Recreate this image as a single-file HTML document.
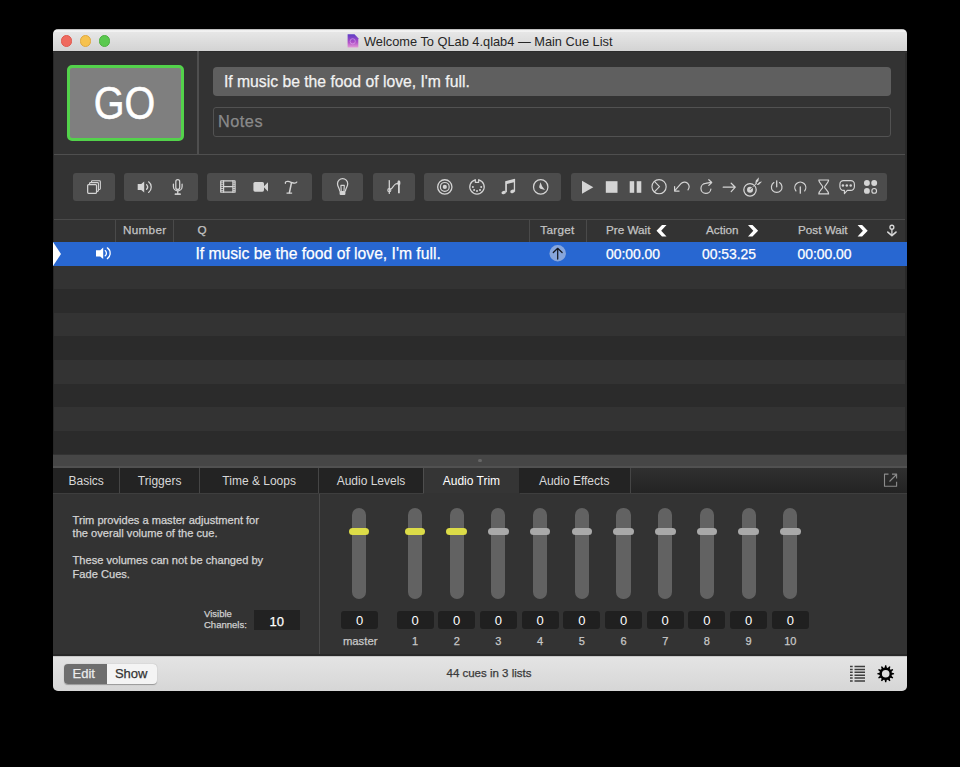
<!DOCTYPE html>
<html><head><meta charset="utf-8">
<style>
*{box-sizing:border-box;margin:0;padding:0}
html,body{-webkit-font-smoothing:antialiased;width:960px;height:767px;background:#000;overflow:hidden;font-family:"Liberation Sans",sans-serif}
.a{position:absolute}
#win{position:absolute;left:53px;top:29px;width:853.6px;height:662px;border-radius:5px;overflow:hidden;background:#333}
#title{left:0;top:0;width:854px;height:22.2px;background:linear-gradient(#a8a8a8 0px,#f4f4f4 1.6px,#f2f2f2 2.6px,#e6e6e6 3.4px,#d3d3d3 22.2px)}
.tl{width:11.4px;height:11.4px;border-radius:50%;top:6.2px}
.ttext{font-size:12.8px;color:#262626;white-space:nowrap}
.txt{white-space:nowrap;-webkit-text-stroke:0.25px}
.btn{background:#4c4c4c;border-radius:3px;top:143.5px;height:28.5px}
.ic{stroke:#d0d0d0;fill:none;stroke-width:1.3}
.row{left:0;width:854px}
.tab{top:438.5px;height:25.5px;background:#232323;color:#d8d8d8;font-size:12px;text-align:center;line-height:26.6px;border-right:1px solid #454545}
.trk{width:14.2px;height:91px;border-radius:7.1px;background:#626262;top:479px}
.knob{width:20.5px;height:7px;border-radius:3.5px;background:#a9a9a9;top:499px}
.val{width:37px;height:18px;border-radius:3px;background:#202020;top:582.2px;color:#fff;font-size:13px;text-align:center;line-height:20.6px}
.lbl{top:606.4px;width:40px;color:#c8c8c8;font-size:11px;text-align:center}
.hd{font-size:11.7px;color:#c4c4c4;line-height:16px;margin-top:-1px}
.rv{top:212.7px;line-height:24px;color:#fff;font-size:13.9px}
.pt{font-size:11.1px;line-height:13.5px;color:#d4d4d4}
</style></head><body>
<div id="win">
  <div id="title" class="a">
    <div class="a tl" style="left:7.7px;background:#ef6a5f;border:0.5px solid #e0574c"></div>
    <div class="a tl" style="left:26.9px;background:#f6c24f;border:0.5px solid #e0a83e"></div>
    <div class="a tl" style="left:45.7px;background:#5bc94f;border:0.5px solid #4cb040"></div>
  </div>

  <div class="a" style="left:0;top:22.2px;width:854px;height:1.3px;background:#2b2b2b"></div>
  <div class="a ttext" style="left:311px;top:4.6px">Welcome To QLab 4.qlab4 — Main Cue List</div>
  <!-- top area -->
  <div class="a" style="left:14px;top:36px;width:117px;height:75.6px;border:3px solid #53d24b;border-radius:5px;background:#7f7f7f"></div>
  <div class="a txt" style="left:12.5px;top:37.3px;width:117px;height:75.6px;line-height:75px;text-align:center;color:#fff;font-size:46.5px;transform:scaleX(0.85);-webkit-text-stroke:0.6px #fff">GO</div>
  <div class="a" style="left:144.2px;top:22px;width:1.8px;height:103px;background:#4f4f4f"></div>
  <div class="a" style="left:0;top:124.6px;width:854px;height:1.6px;background:#4f4f4f"></div>
  <div class="a" style="left:160px;top:37.5px;width:678px;height:29.5px;border-radius:4px;background:#5f5f5f"></div>
  <div class="a txt" style="left:170.9px;top:37.5px;line-height:29.5px;color:#f2f2f2;font-size:15.73px">If music be the food of love, I'm full.</div>
  <div class="a" style="left:160px;top:78.2px;width:678px;height:30.3px;border-radius:3px;border:1.4px solid #525252"></div>
  <div class="a txt" style="left:165px;top:77px;line-height:30px;color:#8a8a8a;font-size:16.3px;letter-spacing:.5px">Notes</div>
  <!-- toolbar -->
  <div class="a btn" style="left:20px;width:42px"></div>
  <div class="a btn" style="left:71px;width:73.5px"></div>
  <div class="a btn" style="left:154px;width:105px"></div>
  <div class="a btn" style="left:269px;width:41px"></div>
  <div class="a btn" style="left:320px;width:41.5px"></div>
  <div class="a btn" style="left:371px;width:137px"></div>
  <div class="a btn" style="left:518px;width:316px"></div>
  <div class="a" style="left:0;top:190px;width:854px;height:1.2px;background:#4a4a4a"></div>
  <!-- header -->
  <div class="a" style="left:62px;top:191px;width:1px;height:21.6px;background:#4a4a4a"></div>
  <div class="a" style="left:120.2px;top:191px;width:1px;height:21.6px;background:#4a4a4a"></div>
  <div class="a" style="left:475.5px;top:191px;width:1px;height:21.6px;background:#4a4a4a"></div>
  <div class="a" style="left:533px;top:191px;width:1px;height:21.6px;background:#4a4a4a"></div>
  <div class="a txt hd" style="left:70px;top:194px;letter-spacing:.3px">Number</div>
  <div class="a txt hd" style="left:144.5px;top:194px">Q</div>
  <div class="a txt hd" style="left:487.3px;top:194px;letter-spacing:.3px">Target</div>
  <div class="a txt hd" style="left:553px;top:194px">Pre Wait</div>
  <div class="a txt hd" style="left:653px;top:194px">Action</div>
  <div class="a txt hd" style="left:745px;top:194px">Post Wait</div>
  <!-- rows -->
  <div class="a row" style="top:212.7px;height:24px;background:#2867d1"></div>
  <div class="a row" style="top:236.60px;height:23.61px;background:#333"></div>
  <div class="a row" style="top:260.21px;height:23.61px;background:#2b2b2b"></div>
  <div class="a row" style="top:283.82px;height:23.61px;background:#333"></div>
  <div class="a row" style="top:307.43px;height:23.61px;background:#2b2b2b"></div>
  <div class="a row" style="top:331.04px;height:23.61px;background:#333"></div>
  <div class="a row" style="top:354.65px;height:23.61px;background:#2b2b2b"></div>
  <div class="a row" style="top:378.26px;height:23.61px;background:#333"></div>
  <div class="a row" style="top:401.87px;height:23.61px;background:#2b2b2b"></div>
  <svg class="a" style="left:0;top:212.7px" width="8" height="24"><path d="M0 0L8 12L0 24Z" fill="#fff"/></svg>
  <div class="a txt" style="left:142.4px;top:212.7px;line-height:24px;color:#fff;font-size:15.7px">If music be the food of love, I'm full.</div>
  <div class="a txt rv" style="left:553px">00:00.00</div>
  <div class="a txt rv" style="left:649px">00:53.25</div>
  <div class="a txt rv" style="left:744.5px">00:00.00</div>
  <!-- splitter -->
  <div class="a" style="left:0;top:425.5px;width:854px;height:13.3px;background:#464646"></div>
  <div class="a" style="left:0;top:437.4px;width:854px;height:1.2px;background:#515151"></div>
  <div class="a" style="left:425.3px;top:430px;width:3.4px;height:3.4px;border-radius:50%;background:#666"></div>
  <!-- tabs -->
  <div class="a" style="left:0;top:438.5px;width:854px;height:25.5px;background:linear-gradient(#303030,#232323)"></div>
  <div class="a tab" style="left:0;width:67.3px">Basics</div>
  <div class="a tab" style="left:67.3px;width:79.7px">Triggers</div>
  <div class="a tab" style="left:147px;width:119.3px">Time &amp; Loops</div>
  <div class="a tab" style="left:266.3px;width:104.4px">Audio Levels</div>
  <div class="a tab" style="left:370.2px;width:96.5px;background:#353535;color:#fff;border-right:1.2px solid #4e4e4e;border-left:1.2px solid #4e4e4e;height:26.5px">Audio Trim</div>
  <div class="a tab" style="left:465.5px;width:112.3px">Audio Effects</div>
  <!-- panel -->
  <div class="a" style="left:0;top:464px;width:854px;height:162.8px;background:#333"></div>
  <div class="a" style="left:266px;top:464px;width:1px;height:162.8px;background:#4a4a4a"></div>
  <div class="a" style="left:0;top:464.2px;width:370.7px;height:1.3px;background:#3e3e3e"></div>
  <div class="a" style="left:466.5px;top:464.2px;width:387.5px;height:1.3px;background:#3e3e3e"></div>
  <div class="a txt pt" style="left:19.6px;top:484.8px">Trim provides a master adjustment for<br>the overall volume of the cue.<br><br>These volumes can not be changed by<br>Fade Cues.</div>
  <div class="a txt" style="left:151px;top:579px;font-size:9.5px;line-height:11px;color:#d0d0d0">Visible<br>Channels:</div>
  <div class="a" style="left:201px;top:581px;width:45.7px;height:20px;background:#222"></div>
  <div class="a txt" style="left:200.8px;top:582.5px;width:45.7px;line-height:20px;text-align:center;color:#fff;font-size:13px">10</div>
  <div class="a" style="left:0;top:23.5px;width:1.3px;height:189.2px;background:#282828"></div>
  <div class="a" style="left:0;top:236.6px;width:1.3px;height:188.9px;background:#262626"></div>
  <div class="a" style="left:852.2px;top:23.5px;width:1.4px;height:189.2px;background:#2b2b2b"></div>
  <div class="a" style="left:852.2px;top:236.6px;width:1.4px;height:188.9px;background:#292929"></div>
  <div class="a" style="left:0;top:625.3px;width:854px;height:1.6px;background:#292929"></div>
  <!-- status bar -->
  <div class="a" style="left:0;top:626.8px;width:854px;height:35.2px;background:linear-gradient(#e4e4e4,#d6d6d6);border-top:1px solid #c8c8c8"></div>
  <div class="a" style="left:10.6px;top:635px;width:93.7px;height:19.5px;border-radius:4px;background:#f4f4f4;box-shadow:0 0.5px 1px rgba(0,0,0,.3)"></div>
  <div class="a" style="left:10.6px;top:635px;width:43.3px;height:19.5px;border-radius:4px 0 0 4px;background:#6e6e6e"></div>
  <div class="a txt" style="left:9.1px;top:635px;width:43.3px;line-height:19.5px;text-align:center;color:#ececec;font-size:13px">Edit</div>
  <div class="a txt" style="left:53px;top:635px;width:50.4px;line-height:19.5px;text-align:center;color:#333;font-size:13px">Show</div>
  <div class="a txt" style="left:0;top:635px;width:872px;line-height:19.5px;text-align:center;color:#3a3a3a;font-size:11.5px">44 cues in 3 lists</div>
  <div class="a trk" style="left:298.9px"></div>
  <div class="a knob" style="left:295.8px;background:#dcdc48"></div>
  <div class="a val" style="left:288.1px">0</div>
  <div class="a lbl txt" style="left:287.2px;font-size:11.3px">master</div>
  <div class="a trk" style="left:354.9px"></div>
  <div class="a knob" style="left:351.8px;background:#dcdc48"></div>
  <div class="a val" style="left:343.5px">0</div>
  <div class="a lbl txt" style="left:342.0px">1</div>
  <div class="a trk" style="left:396.6px"></div>
  <div class="a knob" style="left:393.4px;background:#dcdc48"></div>
  <div class="a val" style="left:385.2px">0</div>
  <div class="a lbl txt" style="left:383.7px">2</div>
  <div class="a trk" style="left:438.3px"></div>
  <div class="a knob" style="left:435.1px;background:#a9a9a9"></div>
  <div class="a val" style="left:426.9px">0</div>
  <div class="a lbl txt" style="left:425.4px">3</div>
  <div class="a trk" style="left:480.0px"></div>
  <div class="a knob" style="left:476.9px;background:#a9a9a9"></div>
  <div class="a val" style="left:468.6px">0</div>
  <div class="a lbl txt" style="left:467.1px">4</div>
  <div class="a trk" style="left:521.7px"></div>
  <div class="a knob" style="left:518.5px;background:#a9a9a9"></div>
  <div class="a val" style="left:510.3px">0</div>
  <div class="a lbl txt" style="left:508.8px">5</div>
  <div class="a trk" style="left:563.4px"></div>
  <div class="a knob" style="left:560.2px;background:#a9a9a9"></div>
  <div class="a val" style="left:552.0px">0</div>
  <div class="a lbl txt" style="left:550.5px">6</div>
  <div class="a trk" style="left:605.1px"></div>
  <div class="a knob" style="left:602.0px;background:#a9a9a9"></div>
  <div class="a val" style="left:593.7px">0</div>
  <div class="a lbl txt" style="left:592.2px">7</div>
  <div class="a trk" style="left:646.8px"></div>
  <div class="a knob" style="left:643.7px;background:#a9a9a9"></div>
  <div class="a val" style="left:635.4px">0</div>
  <div class="a lbl txt" style="left:633.9px">8</div>
  <div class="a trk" style="left:688.5px"></div>
  <div class="a knob" style="left:685.4px;background:#a9a9a9"></div>
  <div class="a val" style="left:677.1px">0</div>
  <div class="a lbl txt" style="left:675.6px">9</div>
  <div class="a trk" style="left:730.2px"></div>
  <div class="a knob" style="left:727.0px;background:#a9a9a9"></div>
  <div class="a val" style="left:718.8px">0</div>
  <div class="a lbl txt" style="left:717.3px">10</div>
</div>
<svg class="a" style="left:0;top:0" width="960" height="767" viewBox="0 0 960 767">
<g fill="none" stroke="#d4d4d4" stroke-width="1.25" stroke-linecap="round" stroke-linejoin="round">
 <!-- group stack -->
 <rect x="91.45" y="180.75" width="8.9" height="8.7" rx="0.9" fill="#4c4c4c" stroke-width="1.1"/>
 <rect x="89.55" y="182.65" width="8.9" height="8.7" rx="0.9" fill="#4c4c4c" stroke-width="1.1"/>
 <rect x="87.65" y="184.55" width="8.9" height="8.7" rx="0.9" fill="#4c4c4c"/>
 <!-- speaker waves -->
 <path d="M146.6 184.6 A3.4 3.4 0 0 1 146.6 189.3"/>
 <path d="M148.6 181.8 A6.6 6.6 0 0 1 148.6 192.4"/>
 <!-- mic -->
 <rect x="175.8" y="179.7" width="3.9" height="9.7" rx="1.95"/>
 <path d="M173.4 184.2 V186.6 A4.35 4.35 0 0 0 182.1 186.6 V184.2"/>
 <path d="M177.75 191 V193.6 M175.2 194.2 H180.3"/>
 <!-- film -->
 <rect x="220.7" y="180.9" width="14.4" height="11.3" rx="0.3" stroke-width="1.2"/>
 <path d="M223.6 180.9 V192.2 M232.9 180.9 V192.2 M223.6 186.55 H232.9" stroke-width="1.2"/>
 <!-- bulb -->
 <path d="M339.8 191 C339.6 188.5 337.5 186.6 337.5 183.7 A5.1 5.1 0 0 1 347.7 183.7 C347.7 186.6 345.6 188.5 345.4 191"/>
 <path d="M341.2 190.8 L340.9 185.4 H344.3 L344 190.8" stroke-width="1.15"/>
 <!-- fade -->
 <path d="M389.3 180.6 V193.4"/>
 <path d="M390.6 189.3 C393 188 393.6 185 395.6 184 C396.6 183.5 397.5 183.4 398.6 183.4" stroke-width="1.1"/>
 <path d="M398.9 183 V193.3" stroke-width="1.8" stroke-linecap="butt"/>
 <!-- osc -->
 <circle cx="444.8" cy="186.9" r="7.15" stroke-width="1.3"/>
 <circle cx="444.8" cy="186.9" r="4.4" stroke-width="1.2"/>
 <!-- midi -->
 <path d="M475.3 179.85 A7.2 7.2 0 1 0 478.7 179.85" stroke-width="1.25"/>
 <path d="M475.3 179.85 V182.3 H478.7 V179.85" stroke-width="1.2"/>
 <!-- clock -->
 <circle cx="540.7" cy="186.9" r="7.2" stroke-width="1.25"/>
 <!-- goto -->
 <circle cx="659.06" cy="186.7" r="7.1" stroke-width="1.15"/>
 <path d="M654.4 181.4 L659.5 186.7 L654.4 191.9" stroke-width="1.15"/>
 <!-- undo -->
 <path d="M688 189.8 A4.6 4.6 0 1 0 680.95 183.65 L675 190.3" stroke-width="1.2"/>
 <path d="M674.6 186.6 V191.1 H679.1" stroke-width="1.2"/>
 <!-- redo -->
 <path d="M710.9 189 A5 5 0 1 1 705.5 183.4 L711.2 182.4" stroke-width="1.2"/>
 <path d="M708.8 179.7 L711.7 182.5 L708.8 185.4" stroke-width="1.2"/>
 <!-- arrow -->
 <path d="M723.2 187.2 H735.2 M731.2 183.2 L735.3 187.2 L731.2 191.6" stroke-width="1.2"/>
 <!-- dart -->
 <circle cx="750" cy="189.8" r="6.2" stroke-width="1.25"/>
 <path d="M753 186.8 L756.5 183.3" stroke-width="1.0"/>
 <!-- power -->
 <path d="M773.9 182.6 A5.3 5.3 0 1 0 779.5 182.6" stroke-width="1.2"/>
 <path d="M776.7 180.8 V186.8" stroke-width="1.3"/>
 <!-- arch -->
 <path d="M795.9 190.9 A5.5 5.5 0 1 1 804.7 190.9" stroke-width="1.2"/>
 <path d="M800.3 187 V193.2" stroke-width="1.3"/>
 <!-- hourglass -->
 <path d="M818.8 180 H828.6 C828.6 183.2 824.6 185.3 824.6 187 C824.6 188.7 828.6 190.8 828.6 193.9 H818.8 C818.8 190.8 822.8 188.7 822.8 187 C822.8 185.3 818.8 183.2 818.8 180 Z" stroke-width="1.2"/>
 <!-- bubble -->
 <path d="M843.5 180.6 H850.8 A3.6 3.6 0 0 1 854.4 184.2 V186.8 A3.6 3.6 0 0 1 850.8 190.4 H847.3 L844.4 193.6 V190.4 H843.5 A3.6 3.6 0 0 1 839.9 186.8 V184.2 A3.6 3.6 0 0 1 843.5 180.6 Z" stroke-width="1.15"/>
 <circle cx="874.2" cy="190.9" r="2.35" stroke-width="1.15"/>
 <!-- popout -->
 <path d="M888.5 474.1 H884.5 V486.3 H896.6 V481.8 M889.5 481.5 L896 475 M892 474.1 H896.6 V478.4" stroke="#8c8c8c" stroke-width="1.1" stroke-linecap="butt"/>
</g>
<g fill="#d4d4d4">
 <path d="M137.7 184 H141.2 L144.2 181.4 V192.5 L141.2 189.9 H137.7 Z"/>
 <rect x="174.9" y="193.6" width="5.6" height="1.1"/>
 <path d="M220.7 182.80 H223.6 M232.9 182.80 H235.1 M220.7 184.70 H223.6 M232.9 184.70 H235.1 M220.7 186.60 H223.6 M232.9 186.60 H235.1 M220.7 188.50 H223.6 M232.9 188.50 H235.1 M220.7 190.40 H223.6 M232.9 190.40 H235.1" stroke="#d4d4d4" stroke-width="0.9"/>
 <path d="M253.4 183.6 Q253.4 182 255 182 H262.4 Q264 182 264 183.6 V190.1 Q264 191.7 262.4 191.7 H255 Q253.4 191.7 253.4 190.1 Z"/>
 <path d="M263.4 186.85 L268 182.3 V191.4 Z"/>
 <rect x="339.6" y="191.1" width="5.8" height="3.9" rx="1"/>
 <circle cx="389.3" cy="190.2" r="1.55" fill="none" stroke="#d4d4d4" stroke-width="1.1"/>
 <ellipse cx="398.9" cy="182.9" rx="1.55" ry="2.6"/>
 <circle cx="444.8" cy="186.9" r="2.1"/>
 <circle cx="472.9" cy="186.9" r="1"/><circle cx="481.2" cy="186.9" r="1"/>
 <circle cx="474.1" cy="189.9" r="1"/><circle cx="480" cy="189.9" r="1"/><circle cx="477" cy="191.1" r="1"/>
 <path d="M505.2 181.2 L514.9 178.8 V181.9 L506.9 183.9 V192.2 H505.2 Z"/>
 <rect x="513.8" y="179" width="1.3" height="12.6"/>
 <ellipse cx="503.7" cy="192.5" rx="2.3" ry="1.7" transform="rotate(-20 503.7 192.5)"/>
 <ellipse cx="512.5" cy="191.4" rx="2.3" ry="1.7" transform="rotate(-20 512.5 191.4)"/>
 <path d="M540.5 182.2 L542.1 186.2 L545 189.9 L540.4 188.7 L539.1 187.3 L539.5 185.6 Z"/>
 <path d="M582 180.7 L593.3 187.2 L582 193.7 Z"/>
 <rect x="605.8" y="181.2" width="11.7" height="11.6"/>
 <rect x="629.7" y="181.2" width="4.5" height="11.6"/>
 <rect x="636.7" y="181.2" width="4.6" height="11.6"/>
 <circle cx="750" cy="189.8" r="3"/>
 <path d="M755.2 183.9 L755.8 180.6 L758.9 177.3 L758.4 180.9 Z M756.3 185 L759.5 182.1 L762.1 181.4 L758.9 184.8 Z"/>
 <circle cx="842.9" cy="185.5" r="1.25"/><circle cx="846.8" cy="185.5" r="1.25"/><circle cx="850.7" cy="185.5" r="1.25"/>
 <circle cx="866.9" cy="183" r="2.95"/><circle cx="874.2" cy="183" r="2.95"/><circle cx="866.9" cy="190.9" r="2.95"/>
</g>
<path d="M750 189.8 L753.3 186.5" stroke="#4c4c4c" stroke-width="0.9"/>
<g fill="none" stroke="#d4d4d4" stroke-linecap="round">
 <path d="M285.4 183.3 C285 181.9 286.4 181.2 288 181.4 C290.5 181.7 292.5 183.3 294.8 183.2 C295.8 183.2 296.5 182.8 296.8 182.1" stroke-width="1.3"/>
 <path d="M291.4 183.2 L289.4 192.6" stroke-width="1.55"/>
 <path d="M286.9 193.1 H291.7" stroke-width="1.1"/>
</g>
<!-- row speaker -->
<g fill="#fff"><path d="M96 250.3 H100.2 L103.2 247.6 V259.1 L100.2 256.6 H96 Z"/></g>
<g fill="none" stroke="#fff" stroke-width="1.3" stroke-linecap="round">
 <path d="M105.2 250.6 A3.4 3.4 0 0 1 105.2 255.8"/>
 <path d="M107.4 247.9 A6.6 6.6 0 0 1 107.4 258.6"/>
</g>
<!-- target circle -->
<circle cx="557.7" cy="253.3" r="8.2" fill="#87a6dc"/>
<path d="M557.7 259 V248.8 M553.3 252.5 L557.7 248.3 L562.1 252.5" fill="none" stroke="#141820" stroke-width="1.25" stroke-linecap="round" stroke-linejoin="round"/>
<!-- header chevrons -->
<path fill="#fff" d="M662 224.9 H666.5 L661.2 230.7 L666.5 236.5 H662 L656.5 230.7 Z M748 224.9 H752.5 L758.1 230.7 L752.5 236.5 H748 L753.3 230.7 Z M857.6 224.9 H862.1 L867.7 230.7 L862.1 236.5 H857.6 L862.9 230.7 Z"/>
<!-- anchor -->
<g fill="none" stroke="#d8d8d8" stroke-width="1.2">
 <circle cx="891.9" cy="227.2" r="1.95" stroke-width="1.3"/>
 <path d="M891.9 229.1 V235" stroke-width="1.3"/>
 <path d="M887.8 232.1 L891.9 235.6 L896 232.1" stroke-width="1.6" stroke-linejoin="round" stroke-linecap="round"/>
</g>
<!-- title icon -->
<defs><linearGradient id="qg" x1="0" y1="0" x2="0" y2="1"><stop offset="0" stop-color="#5b3cc4"/><stop offset="0.6" stop-color="#b050c8"/><stop offset="1" stop-color="#e49ad8"/></linearGradient></defs>
<path d="M347.6 34.2 H354.5 L358.3 38.2 V47.6 H347.6 Z" fill="url(#qg)"/>
<circle cx="352.7" cy="41.3" r="2.6" fill="none" stroke="#e0b0f0" stroke-width="0.8" opacity="0.7"/>
<!-- list icon -->
<g stroke="#3e3e3e" stroke-width="1.5">
 <path d="M850 666.6 H852.7 M854.5 666.6 H865 M850 669.5 H852.7 M854.5 669.5 H865 M850 672.3 H852.7 M854.5 672.3 H865 M850 675.2 H852.7 M854.5 675.2 H865 M850 678.05 H852.7 M854.5 678.05 H865 M850 680.9 H852.7 M854.5 680.9 H865"/>
</g>
<!-- gear -->
<g transform="translate(885.7 673.75)">
 <circle r="5.05" fill="none" stroke="#000" stroke-width="2.5"/>
 <path fill="#000" d="M-1.26 -5.46 L-0.59 -8.38 L0.59 -8.38 L1.26 -5.46 Z M1.64 -5.36 L3.68 -7.55 L4.70 -6.96 L3.82 -4.10 Z M4.10 -3.82 L6.96 -4.70 L7.55 -3.68 L5.36 -1.64 Z M5.46 -1.26 L8.38 -0.59 L8.38 0.59 L5.46 1.26 Z M5.36 1.64 L7.55 3.68 L6.96 4.70 L4.10 3.82 Z M3.82 4.10 L4.70 6.96 L3.68 7.55 L1.64 5.36 Z M1.26 5.46 L0.59 8.38 L-0.59 8.38 L-1.26 5.46 Z M-1.64 5.36 L-3.68 7.55 L-4.70 6.96 L-3.82 4.10 Z M-4.10 3.82 L-6.96 4.70 L-7.55 3.68 L-5.36 1.64 Z M-5.46 1.26 L-8.38 0.59 L-8.38 -0.59 L-5.46 -1.26 Z M-5.36 -1.64 L-7.55 -3.68 L-6.96 -4.70 L-4.10 -3.82 Z M-3.82 -4.10 L-4.70 -6.96 L-3.68 -7.55 L-1.64 -5.36 Z"/>
</g>
</svg>
</body></html>
